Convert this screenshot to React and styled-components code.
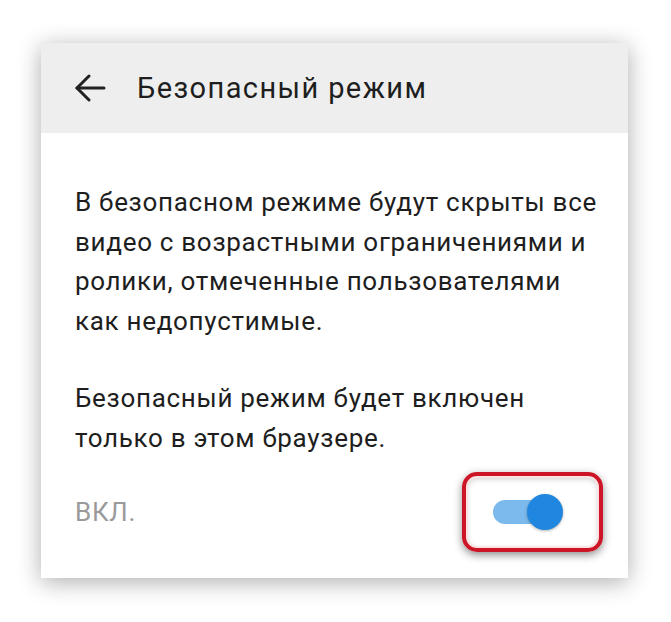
import React, { useState } from "react";
import styled, { createGlobalStyle } from "styled-components";

const GlobalStyle = createGlobalStyle`
    html, body {
        margin: 0;
        padding: 0;
        background: #ffffff;
        font-family: Roboto, "Liberation Sans", sans-serif;
    }
`;

const Page = styled.div`
    width: 671px;
    height: 622px;
    padding: 43px 0 0 41px;
    box-sizing: border-box;
`;

const Card = styled.div`
    width: 587px;
    height: 535px;
    background: #ffffff;
    box-shadow: 0 4px 22px rgba(0, 0, 0, 0.32);
    display: flex;
    flex-direction: column;
`;

const Header = styled.div`
    height: 90px;
    background: #eeeeee;
    display: flex;
    align-items: center;
    padding-left: 33px;
    gap: 31px;
`;

const BackIcon = styled.svg`
    width: 32px;
    height: 28px;
    flex-shrink: 0;
`;

const Title = styled.h1`
    margin: 0;
    font-size: 29px;
    font-weight: 400;
    color: #1e1e1e;
    letter-spacing: 1.4px;
`;

const Body = styled.div`
    flex: 1;
    padding: 50px 25px 0 34px;
    display: flex;
    flex-direction: column;
`;

const Text = styled.p`
    margin: 0;
    font-size: 26px;
    line-height: 39.7px;
    letter-spacing: 0.7px;
    color: #1e1e1e;
    white-space: nowrap;

    & + & {
        margin-top: 37px;
    }
`;

const ToggleRow = styled.div`
    display: flex;
    align-items: center;
    justify-content: space-between;
    margin-top: 14px;
`;

const Label = styled.span`
    font-size: 26px;
    letter-spacing: 0.7px;
    color: #9a9a9a;
    text-transform: uppercase;
`;

const Highlight = styled.div`
    width: 141px;
    height: 80px;
    box-sizing: border-box;
    border: 4px solid #cc1526;
    border-radius: 15px;
    box-shadow: 0 3px 8px rgba(0, 0, 0, 0.45), inset 0 0 0 2px #fbe3e3, inset 0 2px 6px rgba(0, 0, 0, 0.25);
    display: flex;
    align-items: center;
    justify-content: center;
`;

const Switch = styled.button`
    position: relative;
    width: 70px;
    height: 36px;
    padding: 0;
    border: none;
    background: none;
    cursor: pointer;
    margin-right: 9px;
`;

const Track = styled.span`
    position: absolute;
    left: 0;
    top: 6px;
    width: 56px;
    height: 24px;
    border-radius: 12px;
    background: ${(p) => (p.on ? "#7cb9ec" : "#bdbdbd")};
`;

const Knob = styled.span`
    position: absolute;
    top: 0;
    left: ${(p) => (p.on ? "34px" : "0")};
    width: 36px;
    height: 36px;
    border-radius: 50%;
    background: ${(p) => (p.on ? "#1f87e0" : "#f5f5f5")};
    box-shadow: 0 1px 3px rgba(0, 0, 0, 0.3);
`;

function App() {
    const [on, setOn] = useState(true);

    return (
        <Page>
            <GlobalStyle />
            <Card>
                <Header>
                    <BackIcon viewBox="0 0 32 28" fill="none" stroke="#212121" strokeWidth="3" strokeLinecap="round" strokeLinejoin="round">
                        <path d="M30 14H3" />
                        <path d="M15 2L3 14l12 12" />
                    </BackIcon>
                    <Title>Безопасный режим</Title>
                </Header>
                <Body>
                    <Text>
                        В безопасном режиме будут скрыты все<br />
                        видео с возрастными ограничениями и<br />
                        ролики, отмеченные пользователями<br />
                        как недопустимые.
                    </Text>
                    <Text>
                        Безопасный режим будет включен<br />
                        только в этом браузере.
                    </Text>
                    <ToggleRow>
                        <Label>{on ? "Вкл." : "Выкл."}</Label>
                        <Highlight>
                            <Switch onClick={() => setOn(!on)} aria-label="Безопасный режим">
                                <Track on={on} />
                                <Knob on={on} />
                            </Switch>
                        </Highlight>
                    </ToggleRow>
                </Body>
            </Card>
        </Page>
    );
}

export default App;
